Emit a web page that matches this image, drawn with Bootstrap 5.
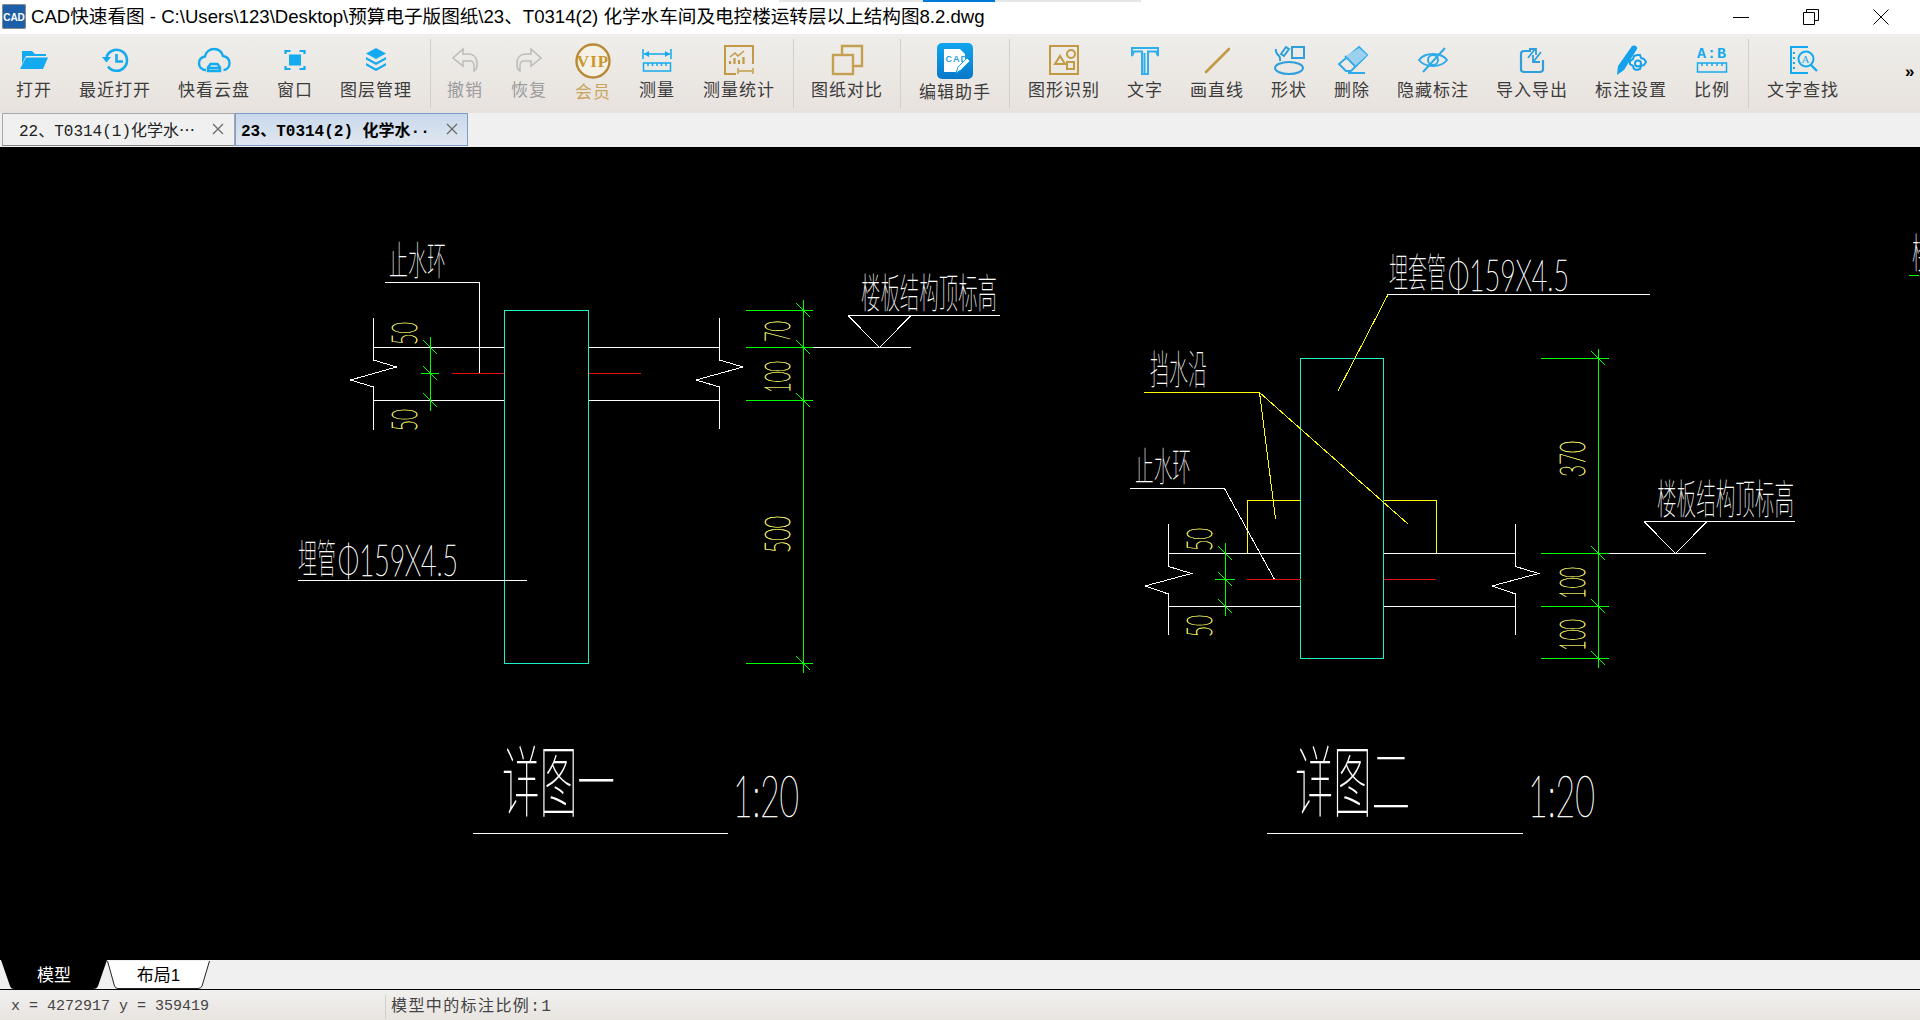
<!DOCTYPE html>
<html lang="zh-CN">
<head>
	<meta charset="UTF-8">
	<meta name="viewport" content="width=device-width, initial-scale=1.0">
	<title>CAD快速看图</title>
	<link href="https://cdn.jsdelivr.net/npm/bootstrap@5.3.0/dist/css/bootstrap.min.css" rel="stylesheet">
	<style>
        html, body {
            height: 100%;
        }
        body {
            overflow: hidden;
            background: #000;
            font-family: "Liberation Sans", "Noto Sans CJK SC", sans-serif;
        }
        .title-bar {
            height: 34px;
            background: #fff;
            color: #000;
            font-size: 18.6px;
        }
        .app-ico {
            margin: 0 5px 0 2px;
        }
        .load-track {
            position: absolute;
            top: 0;
            left: 779px;
            width: 362px;
            height: 2px;
            background: #e6e6e6;
        }
        .load-fill {
            margin-left: 144px;
            width: 72px;
            height: 2px;
            background: #0078d7;
        }
        .win-btn {
            width: 70px;
            height: 34px;
        }
        .tool-bar {
            height: 79px;
            background: linear-gradient(#efeeea, #e8e2de);
        }
        .tool-group {
            gap: 27px;
            height: 69px;
            margin-top: 5px;
            padding: 4px 18px 0;
            border-right: 1px solid #d2cfcb;
        }
        .tool-group.is-first {
            padding-left: 16px;
        }
        .tool-group.is-wide {
            gap: 28px;
            padding-left: 16px;
        }
        .tool-group.is-tight {
            padding-left: 17px;
            padding-right: 17px;
        }
        .tool-group.is-last {
            border-right: 0;
        }
        .tool-btn {
            color: #3c3c3c;
            font-size: 17px;
            line-height: 22px;
            letter-spacing: 1px;
            white-space: nowrap;
        }
        .tool-btn.is-off {
            color: #9c9c9c;
        }
        .tool-btn.is-gold {
            color: #c9a660;
        }
        .tool-ico {
            height: 34px;
            margin-bottom: 3px;
        }
        .tool-ico.is-big {
            height: 36px;
        }
        .more-mark {
            width: 15px;
            margin-top: 27px;
            font-size: 17px;
            font-weight: 700;
            line-height: 22px;
            color: #000;
        }
        .doc-tabs {
            height: 34px;
            padding-left: 2px;
            background: #f0f0f0;
        }
        .doc-tab {
            width: 233px;
            height: 33px;
            padding-top: 4px;
            font-family: "Liberation Mono", "Noto Sans CJK SC", monospace;
            font-size: 16px;
            color: #222;
            background: #f0f0f0;
            border: 1px solid #a8a8a8;
            border-bottom-color: #888;
        }
        .doc-tab.is-current {
            font-weight: 700;
            color: #000;
            background: linear-gradient(#c9d9ec, #e0e7ef);
            border-color: #7c9ccb;
        }
        .tab-name {
            width: 209px;
            padding-left: 16px;
            white-space: nowrap;
        }
        .doc-tab.is-current .tab-name {
            padding-left: 5px;
            width: 210px;
        }
        .tab-x {
            line-height: 1;
            margin-top: -4px;
        }
        .cad-view {
            display: block;
            flex: 1 1 auto;
            min-height: 0;
            width: 1920px;
            background: #000;
        }
        .cad-view .ln {
            fill: none;
            stroke-width: 1;
            shape-rendering: crispEdges;
        }
        .cad-view text {
            font-family: Lato, "Noto Sans CJK SC", sans-serif;
            font-weight: 100;
        }
        .txt-w {
            fill: #fff;
        }
        .txt-y {
            fill: #ffff70;
            stroke: #ffff70;
            stroke-width: .6;
        }
        .num-w {
            stroke: #fff;
            stroke-width: .6;
        }
        .sheet-tabs {
            height: 30px;
            background: #f0f0f0;
            border-bottom: 1px solid #000;
        }
        .sheet-tab {
            position: relative;
            height: 29px;
            padding-top: 1px;
            font-size: 17px;
            line-height: 29px;
            text-align: center;
        }
        .sheet-tab svg {
            position: absolute;
            top: 0;
            left: 0;
        }
        .sheet-tab span {
            position: relative;
        }
        .sheet-a {
            width: 106px;
            margin-left: 1px;
            color: #fff;
        }
        .sheet-b {
            width: 103px;
            color: #000;
        }
        .status-bar {
            height: 30px;
            padding-top: 4px;
            background: linear-gradient(#f1f0ee, #e8e4e0);
            font-family: "Liberation Mono", "Noto Sans CJK SC", monospace;
            color: #444;
        }
        .status-xy {
            width: 385px;
            padding-left: 11px;
            font-size: 15px;
        }
        .status-note {
            height: 24px;
            line-height: 24px;
            padding-left: 5px;
            font-size: 16px;
            letter-spacing: 1.4px;
            border-left: 1px solid #d2cfcb;
        }
	</style>
</head>
<body class="d-flex flex-column">

<!-- заголовок окна -->
<div class="title-bar d-flex align-items-center flex-shrink-0 position-relative">
	<svg class="app-ico" width="24" height="26" viewBox="0 0 24 26">
		<rect x="0" y="0" width="24" height="25" rx="2" fill="#1c5ea8"/>
		<rect x="0.5" y="0.5" width="23" height="24" rx="2" fill="none" stroke="#8a8a8a"/>
		<text x="12" y="17" text-anchor="middle" font-family="Liberation Sans" font-weight="700" font-size="10" fill="#fff">CAD</text>
	</svg>
	<span>CAD快速看图 - C:\Users\123\Desktop\预算电子版图纸\23、T0314(2) 化学水车间及电控楼运转层以上结构图8.2.dwg</span>
	<div class="load-track"><div class="load-fill"></div></div>
	<div class="ms-auto d-flex pe-1">
		<div class="win-btn d-flex align-items-center justify-content-center">
			<svg width="16" height="16" viewBox="0 0 16 16"><path d="M0 8.5H16" stroke="#000"/></svg>
		</div>
		<div class="win-btn d-flex align-items-center justify-content-center">
			<svg width="16" height="16" viewBox="0 0 16 16" fill="none" stroke="#000"><path d="M.5 3.5h11v12H.5zM3.5 3V.5h12v11H12"/></svg>
		</div>
		<div class="win-btn d-flex align-items-center justify-content-center">
			<svg width="16" height="16" viewBox="0 0 16 16"><path d="M.5.5l15 15M15.5.5l-15 15" stroke="#000"/></svg>
		</div>
	</div>
</div>

<!-- панель инструментов -->
<div class="tool-bar d-flex flex-shrink-0">
	<div class="tool-group is-first d-flex">
		<div class="tool-btn d-flex flex-column align-items-center">
			<svg class="tool-ico" width="36" height="34" viewBox="0 0 36 34" fill="#14aaf0">
				<path d="M6 8h10l3 3h11v2H10L6 21z"/>
				<path d="M10 14.500H32L27 26H4z"/>
			</svg>
			打开
		</div>
		<div class="tool-btn d-flex flex-column align-items-center">
			<svg class="tool-ico" width="36" height="34" viewBox="0 0 36 34" fill="none" stroke="#14aaf0" stroke-width="2.600">
				<path d="M9.500 14A10.500 10.500 0 1 1 11 23.500"/>
				<path d="M5 14h9l-4.500 5.500z" fill="#14aaf0" stroke="none"/>
				<path d="M19.500 11v7.500H26"/>
			</svg>
			最近打开
		</div>
		<div class="tool-btn d-flex flex-column align-items-center">
			<svg class="tool-ico" width="36" height="34" viewBox="0 0 36 34" fill="none" stroke="#14aaf0" stroke-width="2.400">
				<path d="M10 27C5 27 3 23 3 20.500 3 16 6 14 9 13.500 10 8.500 14 6 18 6c5 0 8 3.500 9 7 4 .5 6.500 3.500 6.500 7.500 0 3.500-2.500 6.500-6 6.500"/>
				<path d="M12 28v-3.500L14.500 21h7l2.500 3.500V28zM12 25h12"/>
			</svg>
			快看云盘
		</div>
		<div class="tool-btn d-flex flex-column align-items-center">
			<svg class="tool-ico" width="36" height="34" viewBox="0 0 36 34" fill="none" stroke="#14aaf0" stroke-width="2.200">
				<path d="M8.500 11V8h5M22.500 8h5v3M27.500 23v3h-5M13.500 26h-5v-3"/>
				<rect x="12" y="11.500" width="12" height="11" fill="#14aaf0" stroke="none"/>
			</svg>
			窗口
		</div>
		<div class="tool-btn d-flex flex-column align-items-center">
			<svg class="tool-ico" width="36" height="34" viewBox="0 0 36 34" fill="#14aaf0">
				<path d="M18 5l10 5.500L18 16 8 10.500z"/>
				<path d="M8 14l10 5.500L28 14v2.500L18 22 8 16.500z"/>
				<path d="M8 20l10 5.500L28 20v2.500L18 28 8 22.500z"/>
			</svg>
			图层管理
		</div>
	</div>
	<div class="tool-group is-wide d-flex">
		<div class="tool-btn is-off d-flex flex-column align-items-center">
			<svg class="tool-ico" width="36" height="34" viewBox="0 0 36 34" fill="none" stroke="#bdbdbd" stroke-width="1.600">
				<path d="M16 6L6 15l10 8v-5h7c3 0 4 2 4 5v5c3-1 3-4 3-8 0-6-4-9-9-9h-5z"/>
			</svg>
			撤销
		</div>
		<div class="tool-btn is-off d-flex flex-column align-items-center">
			<svg class="tool-ico" width="36" height="34" viewBox="0 0 36 34" fill="none" stroke="#bdbdbd" stroke-width="1.600">
				<path d="M20 6l10 9-10 8v-5h-7c-3 0-4 2-4 5v5c-3-1-3-4-3-8 0-6 4-9 9-9h5z"/>
			</svg>
			恢复
		</div>
		<div class="tool-btn is-gold d-flex flex-column align-items-center">
			<svg class="tool-ico is-big" width="36" height="36" viewBox="0 0 36 36">
				<circle cx="18" cy="18" r="16.500" fill="#f6f1e6" stroke="#b88b3a" stroke-width="2.400"/>
				<text x="18" y="23.500" text-anchor="middle" font-family="Liberation Serif" font-weight="700" font-size="17" fill="#c8982f">VIP</text>
			</svg>
			会员
		</div>
		<div class="tool-btn d-flex flex-column align-items-center">
			<svg class="tool-ico" width="36" height="34" viewBox="0 0 36 34" fill="none" stroke="#14aaf0" stroke-width="1.500">
				<path d="M4 6v10M32 6v10M5 11h26"/>
				<path d="M5 11l5-3v6zM31 11l-5-3v6z" fill="#14aaf0" stroke="none"/>
				<path d="M4.500 20h27v8h-27zM9 20v3M13.500 20v3M18 20v3M22.500 20v3M27 20v3"/>
			</svg>
			测量
		</div>
		<div class="tool-btn d-flex flex-column align-items-center">
			<svg class="tool-ico" width="36" height="34" viewBox="0 0 36 34" fill="none" stroke="#c29a45" stroke-width="2">
				<path d="M15 31H4V3h28v18"/>
				<path d="M9 14l5-4 3 3 6-5" stroke-width="1.500"/>
				<path d="M9 21v-3M13.500 21v-6M18 21v-4M22.500 21v-7" stroke-width="2.200"/>
				<path d="M17 25v6M32 25v6M18 28h13" stroke-width="1.400"/>
			</svg>
			测量统计
		</div>
	</div>
	<div class="tool-group is-tight d-flex">
		<div class="tool-btn d-flex flex-column align-items-center">
			<svg class="tool-ico" width="36" height="34" viewBox="0 0 36 34" fill="none" stroke="#c4a052" stroke-width="2.400">
				<path d="M13 12V3h20v20h-9"/>
				<rect x="4" y="12" width="20" height="19"/>
			</svg>
			图纸对比
		</div>
	</div>
	<div class="tool-group d-flex">
		<div class="tool-btn d-flex flex-column align-items-center">
			<svg class="tool-ico is-big" width="36" height="36" viewBox="0 0 36 36">
				<defs>
					<linearGradient id="helperFill" x1="0" y1="0" x2="0" y2="1">
						<stop offset="0" stop-color="#12a5ef"/>
						<stop offset="1" stop-color="#0878c8"/>
					</linearGradient>
				</defs>
				<rect width="36" height="36" rx="5" fill="url(#helperFill)"/>
				<path d="M7 6h16l5 5v7l-8 11H7z" fill="#fff"/>
				<text x="8.500" y="19" font-family="Liberation Sans" font-weight="700" font-size="9" fill="#2a9fe0">CAD</text>
				<path d="M19 30l2-6 9-9 3 3-9 9z" fill="#fff" stroke="#12a5ef"/>
			</svg>
			编辑助手
		</div>
	</div>
	<div class="tool-group d-flex">
		<div class="tool-btn d-flex flex-column align-items-center">
			<svg class="tool-ico" width="36" height="34" viewBox="0 0 36 34" fill="none" stroke="#c29a45" stroke-width="2">
				<rect x="4" y="3" width="28" height="28"/>
				<path d="M14 13l5 8H9z"/>
				<circle cx="25" cy="11" r="4"/>
				<rect x="21" y="19" width="7" height="7"/>
			</svg>
			图形识别
		</div>
		<div class="tool-btn d-flex flex-column align-items-center">
			<svg class="tool-ico" width="36" height="34" viewBox="0 0 36 34" fill="none" stroke="#2fb0ee" stroke-width="2">
				<path d="M5 5h26v8l-2-4.500H21V31h-6V8.500H7L5 13z"/>
				<path d="M17.500 10v20"/>
			</svg>
			文字
		</div>
		<div class="tool-btn d-flex flex-column align-items-center">
			<svg class="tool-ico" width="36" height="34" viewBox="0 0 36 34">
				<path d="M7 29L30 6" stroke="#c29a45" stroke-width="2.600" stroke-linecap="round"/>
			</svg>
			画直线
		</div>
		<div class="tool-btn d-flex flex-column align-items-center">
			<svg class="tool-ico" width="36" height="34" viewBox="0 0 36 34" fill="none" stroke="#2e9fdd" stroke-width="2">
				<rect x="21" y="4" width="12" height="11"/>
				<ellipse cx="18" cy="25" rx="14" ry="6"/>
				<path d="M5 6c-1 3 1 5 3 7 2 2 1 4 1 5"/>
				<path d="M10 11l5-7 3 2-5 7z"/>
			</svg>
			形状
		</div>
		<div class="tool-btn d-flex flex-column align-items-center">
			<svg class="tool-ico" width="36" height="34" viewBox="0 0 36 34" fill="none" stroke="#2eaae8" stroke-width="2">
				<path d="M25 4l8 8-16 16h-5l-7-7z"/>
				<path d="M11 13l10 10M14 30h17"/>
				<path d="M25 5l8 7-11 10-10-9z" fill="#9bd0ee" stroke="none"/>
			</svg>
			删除
		</div>
		<div class="tool-btn d-flex flex-column align-items-center">
			<svg class="tool-ico" width="36" height="34" viewBox="0 0 36 34" fill="none" stroke="#2eaae8" stroke-width="2">
				<path d="M4 17c6-8 22-8 28 0-6 8-22 8-28 0z"/>
				<circle cx="18" cy="17" r="5"/>
				<path d="M8 29L30 5"/>
			</svg>
			隐藏标注
		</div>
		<div class="tool-btn d-flex flex-column align-items-center">
			<svg class="tool-ico" width="36" height="34" viewBox="0 0 36 34" fill="none" stroke="#2e9fdd" stroke-width="2.200">
				<path d="M17 8h-7a3 3 0 0 0-3 3v15a3 3 0 0 0 3 3h16a3 3 0 0 0 3-3v-9"/>
				<path d="M14 15l7-9M15 6h7v6M27 9l-7 9M19 12v7h7" stroke-width="1.800"/>
			</svg>
			导入导出
		</div>
		<div class="tool-btn d-flex flex-column align-items-center">
			<svg class="tool-ico" width="36" height="34" viewBox="0 0 36 34" fill="none" stroke="#14a0ea" stroke-width="2">
				<path d="M4 32l1-9L19 3c2-1.500 6 .5 5 3L11 27z" fill="#14a0ea" stroke="none"/>
				<path d="M24 12l3 0 1 3 3 1 2 3-2 3-3 1-1 3-3 1-3-1-1-3-3-2 0-3 3-2 1-3z" fill="#efeeea"/>
				<circle cx="25" cy="20.500" r="3"/>
			</svg>
			标注设置
		</div>
		<div class="tool-btn d-flex flex-column align-items-center">
			<svg class="tool-ico" width="36" height="34" viewBox="0 0 36 34" fill="none" stroke="#14aaf0" stroke-width="1.500">
				<text x="18" y="15" text-anchor="middle" font-family="Liberation Mono" font-weight="700" font-size="15" letter-spacing="1" fill="#14aaf0" stroke="none">A:B</text>
				<path d="M3.500 20h29v9h-29zM8 20v3M13 20v3M18 20v3M23 20v3M28 20v3"/>
			</svg>
			比例
		</div>
	</div>
	<div class="tool-group is-last d-flex">
		<div class="tool-btn d-flex flex-column align-items-center">
			<svg class="tool-ico" width="36" height="34" viewBox="0 0 36 34" fill="none" stroke="#14aaf0" stroke-width="2">
				<path d="M23 4H6v26h17"/>
				<path d="M9 9v18" stroke-dasharray="2 3"/>
				<circle cx="21" cy="16" r="7.500"/>
				<path d="M26 22l6 6" stroke-width="2.400"/>
				<text x="21" y="20" text-anchor="middle" font-family="Liberation Serif" font-size="11" fill="#14aaf0" stroke="none">A</text>
			</svg>
			文字查找
		</div>
	</div>
	<div class="more-mark ms-auto">»</div>
</div>

<!-- вкладки документов -->
<ul class="nav doc-tabs flex-shrink-0">
	<li class="doc-tab d-flex align-items-center">
		<span class="tab-name">22、T0314(1)化学水⋯</span>
		<span class="tab-x">
			<svg width="12" height="12" viewBox="0 0 12 12"><path d="M1 1l10 10M11 1L1 11" stroke="#6a6a6a" stroke-width="1.300"/></svg>
		</span>
	</li>
	<li class="doc-tab is-current d-flex align-items-center">
		<span class="tab-name">23、T0314(2) 化学水··</span>
		<span class="tab-x">
			<svg width="12" height="12" viewBox="0 0 12 12"><path d="M1 1l10 10M11 1L1 11" stroke="#6a6a6a" stroke-width="1.300"/></svg>
		</span>
	</li>
</ul>

<!-- чертёж: координаты совпадают с экранными -->
<svg class="cad-view" viewBox="0 147 1920 813" preserveAspectRatio="xMinYMin slice">
	<defs>
		<path id="tickMark" d="M-7-7L7 7" stroke="#00ff00" stroke-width="1" fill="none" shape-rendering="crispEdges"/>
	</defs>

	<!-- деталь 1 -->
	<rect class="ln" x="504.500" y="310.500" width="84" height="353" stroke="#20f0c8"/>
	<path class="ln" stroke="#fff" d="M385 282.500H479.500V373.500"/>
	<path class="ln" stroke="#e01010" d="M452 373.500H504M589 373.500H641"/>
	<path class="ln" stroke="#fff" d="M373.500 347.500H504M373.500 400.500H504M589 347.500H720M589 400.500H720"/>
	<path class="ln" stroke="#fff" d="M373.500 318V360L396.500 367L350.500 380L373.500 387V430"/>
	<path class="ln" stroke="#fff" d="M719.500 318V360L743 367L696 380L719.500 387V429"/>
	<path class="ln" stroke="#00ff00" d="M430.500 337V411M420.500 373.500H439"/>
	<use href="#tickMark" x="430.500" y="347.500"/>
	<use href="#tickMark" x="430.500" y="373.500"/>
	<use href="#tickMark" x="430.500" y="400.500"/>
	<path class="ln" stroke="#00ff00" d="M803.500 300V673M746 310.500H813M746 347.500H813M746 400.500H813M746 663.500H813"/>
	<use href="#tickMark" x="803.500" y="310.500"/>
	<use href="#tickMark" x="803.500" y="347.500"/>
	<use href="#tickMark" x="803.500" y="400.500"/>
	<use href="#tickMark" x="803.500" y="663.500"/>
	<path class="ln" stroke="#fff" d="M813 347.500H911M848 315.500H1000M848 315.500L879.500 347.500L911 315.500"/>
	<path class="ln" stroke="#fff" d="M298 580.500H527"/>
	<path class="ln" stroke="#fff" d="M473 833.500H728"/>

	<text class="txt-w" x="389" y="275" font-size="40" textLength="57" lengthAdjust="spacingAndGlyphs">止水环</text>
	<text class="txt-w" x="861" y="308" font-size="41" textLength="136" lengthAdjust="spacingAndGlyphs">楼板结构顶标高</text>
	<text class="txt-w" x="298" y="573" font-size="40" textLength="38" lengthAdjust="spacingAndGlyphs">埋管</text>
	<text class="txt-w num-w" x="338" y="576" font-size="44" textLength="120" lengthAdjust="spacingAndGlyphs">Φ159X4.5</text>
	<text class="txt-w" x="502" y="811" font-size="78" textLength="113" lengthAdjust="spacingAndGlyphs">详图一</text>
	<text class="txt-w num-w" x="733" y="817" font-size="58" textLength="66" lengthAdjust="spacingAndGlyphs">1:20</text>

	<text class="txt-y" transform="translate(417 345) rotate(-90)" font-size="36" textLength="23" lengthAdjust="spacingAndGlyphs">50</text>
	<text class="txt-y" transform="translate(417 431) rotate(-90)" font-size="36" textLength="22" lengthAdjust="spacingAndGlyphs">50</text>
	<text class="txt-y" transform="translate(790 342) rotate(-90)" font-size="36" textLength="21" lengthAdjust="spacingAndGlyphs">70</text>
	<text class="txt-y" transform="translate(790 393) rotate(-90)" font-size="36" textLength="32" lengthAdjust="spacingAndGlyphs">100</text>
	<text class="txt-y" transform="translate(790 553) rotate(-90)" font-size="36" textLength="37" lengthAdjust="spacingAndGlyphs">500</text>

	<!-- деталь 2 -->
	<rect class="ln" x="1300.500" y="358.500" width="83" height="300" stroke="#20f0c8"/>
	<path class="ln" stroke="#fff" d="M1388 294.500H1650"/>
	<path class="ln" stroke="#ffff00" d="M1388 294.500L1338 391M1144 392.500H1259.500L1275.500 519M1259.500 392.500L1408 524"/>
	<path class="ln" stroke="#ffff00" d="M1300.500 500.500H1247.500V553M1383.500 500.500H1436.500V553"/>
	<path class="ln" stroke="#fff" d="M1130 488.500H1224.500L1274.500 579.500"/>
	<path class="ln" stroke="#e01010" d="M1247 579.500H1300.500M1383.500 579.500H1436"/>
	<path class="ln" stroke="#fff" d="M1168.500 553.500H1300.500M1168.500 606.500H1300.500M1383.500 553.500H1515.500M1383.500 606.500H1515.500"/>
	<path class="ln" stroke="#fff" d="M1168.500 524V566.500L1191.500 573.500L1145 586L1168.500 594V635"/>
	<path class="ln" stroke="#fff" d="M1515.500 524V566.500L1538.500 573.500L1492 586L1515.500 594V635"/>
	<path class="ln" stroke="#00ff00" d="M1225.500 543V616M1215 579.500H1234.500"/>
	<use href="#tickMark" x="1225.500" y="553.500"/>
	<use href="#tickMark" x="1225.500" y="579.500"/>
	<use href="#tickMark" x="1225.500" y="606.500"/>
	<path class="ln" stroke="#00ff00" d="M1598.500 349V668M1541 358.500H1608.500M1541 553.500H1608.500M1541 606.500H1608.500M1541 658.500H1608.500"/>
	<use href="#tickMark" x="1598.500" y="358.500"/>
	<use href="#tickMark" x="1598.500" y="553.500"/>
	<use href="#tickMark" x="1598.500" y="606.500"/>
	<use href="#tickMark" x="1598.500" y="658.500"/>
	<path class="ln" stroke="#fff" d="M1608.500 553.500H1706M1644 521.500H1795M1644 521.500L1675.500 553.500L1707 521.500"/>
	<path class="ln" stroke="#fff" d="M1267 833.500H1523"/>

	<text class="txt-w" x="1389" y="287" font-size="40" textLength="57" lengthAdjust="spacingAndGlyphs">埋套管</text>
	<text class="txt-w num-w" x="1448" y="291" font-size="44" textLength="121" lengthAdjust="spacingAndGlyphs">Φ159X4.5</text>
	<text class="txt-w" x="1150" y="384" font-size="40" textLength="57" lengthAdjust="spacingAndGlyphs">挡水沿</text>
	<text class="txt-w" x="1135" y="481" font-size="40" textLength="56" lengthAdjust="spacingAndGlyphs">止水环</text>
	<text class="txt-w" x="1657" y="514" font-size="41" textLength="137" lengthAdjust="spacingAndGlyphs">楼板结构顶标高</text>
	<text class="txt-w" x="1295" y="811" font-size="78" textLength="115" lengthAdjust="spacingAndGlyphs">详图二</text>
	<text class="txt-w num-w" x="1528" y="817" font-size="58" textLength="67" lengthAdjust="spacingAndGlyphs">1:20</text>

	<text class="txt-y" transform="translate(1212 551) rotate(-90)" font-size="36" textLength="23" lengthAdjust="spacingAndGlyphs">50</text>
	<text class="txt-y" transform="translate(1212 637) rotate(-90)" font-size="36" textLength="22" lengthAdjust="spacingAndGlyphs">50</text>
	<text class="txt-y" transform="translate(1585 477) rotate(-90)" font-size="36" textLength="36" lengthAdjust="spacingAndGlyphs">370</text>
	<text class="txt-y" transform="translate(1585 599) rotate(-90)" font-size="36" textLength="32" lengthAdjust="spacingAndGlyphs">100</text>
	<text class="txt-y" transform="translate(1585 651) rotate(-90)" font-size="36" textLength="32" lengthAdjust="spacingAndGlyphs">100</text>

	<!-- обрезанная подпись у правого края -->
	<text class="txt-w" x="1912" y="268" font-size="41" textLength="136" lengthAdjust="spacingAndGlyphs">楼板结构顶标高</text>
	<path class="ln" stroke="#00ff00" d="M1909 275.500H1919"/>
</svg>

<!-- листы -->
<div class="sheet-tabs d-flex flex-shrink-0">
	<div class="sheet-tab sheet-a">
		<svg width="106" height="29" viewBox="0 0 106 29"><path d="M0 0H106L97 26Q96 29 92 29H13Q10 29 9 26Z" fill="#000"/></svg>
		<span>模型</span>
	</div>
	<div class="sheet-tab sheet-b">
		<svg width="103" height="29" viewBox="0 0 103 29"><path d="M.5 1L7.500 26Q8.500 28.500 11 28.500H91Q94 28.500 95 26L102.500 1" fill="#fff" stroke="#222"/></svg>
		<span>布局1</span>
	</div>
</div>

<!-- строка состояния -->
<div class="status-bar d-flex align-items-center flex-shrink-0">
	<div class="status-xy">x = 4272917 y = 359419</div>
	<div class="status-note">模型中的标注比例:1</div>
</div>

<script src="https://cdn.jsdelivr.net/npm/bootstrap@5.3.0/dist/js/bootstrap.bundle.min.js"></script>
</body>
</html>
